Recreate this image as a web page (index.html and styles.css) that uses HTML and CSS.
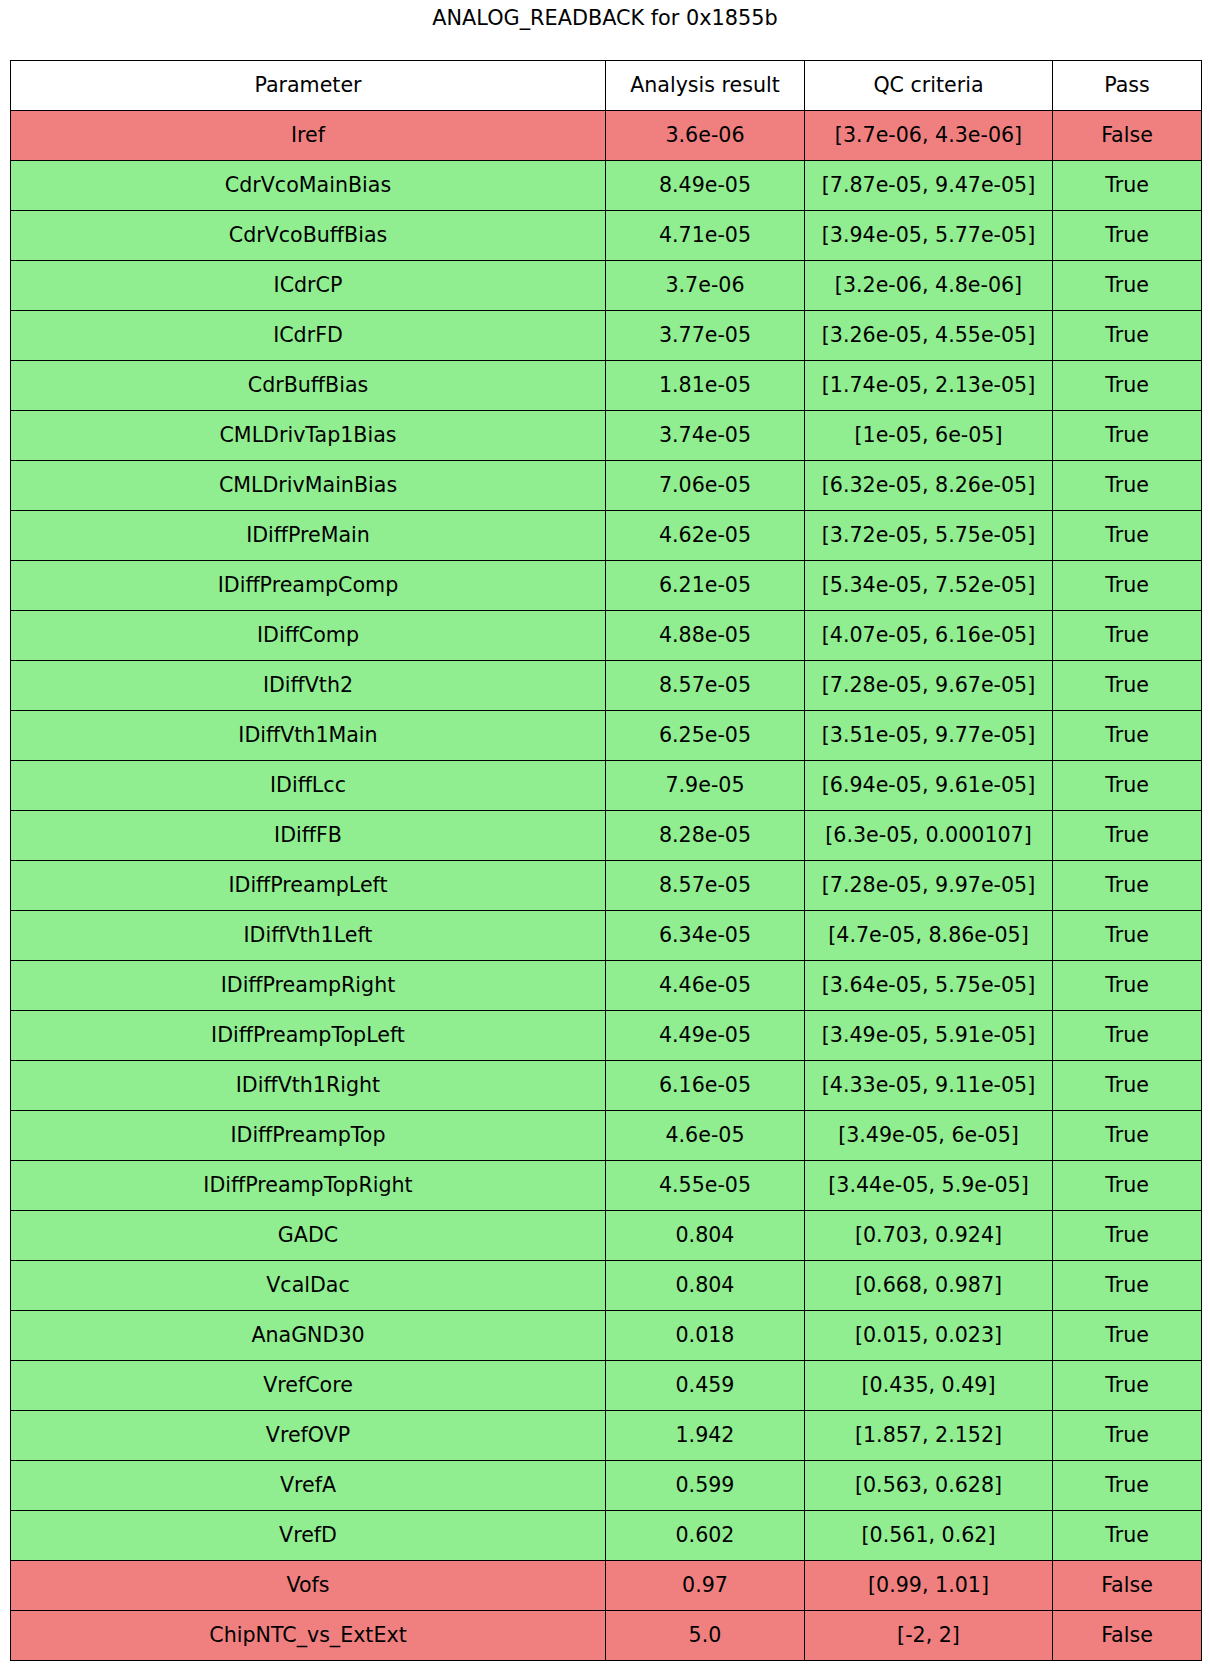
FILE: index.html
```html
<!DOCTYPE html>
<html>
<head>
<meta charset="utf-8">
<link rel="stylesheet" href="styles.css">
</head>
<body>
<div class="title">ANALOG_READBACK for 0x1855b</div>
<div class="table">
  <div class="cell head">Parameter</div><div class="cell head">Analysis result</div><div class="cell head">QC criteria</div><div class="cell head">Pass</div>
  <div class="cell bad">Iref</div><div class="cell bad">3.6e-06</div><div class="cell bad">[3.7e-06, 4.3e-06]</div><div class="cell bad">False</div>
  <div class="cell ok">CdrVcoMainBias</div><div class="cell ok">8.49e-05</div><div class="cell ok">[7.87e-05, 9.47e-05]</div><div class="cell ok">True</div>
  <div class="cell ok">CdrVcoBuffBias</div><div class="cell ok">4.71e-05</div><div class="cell ok">[3.94e-05, 5.77e-05]</div><div class="cell ok">True</div>
  <div class="cell ok">ICdrCP</div><div class="cell ok">3.7e-06</div><div class="cell ok">[3.2e-06, 4.8e-06]</div><div class="cell ok">True</div>
  <div class="cell ok">ICdrFD</div><div class="cell ok">3.77e-05</div><div class="cell ok">[3.26e-05, 4.55e-05]</div><div class="cell ok">True</div>
  <div class="cell ok">CdrBuffBias</div><div class="cell ok">1.81e-05</div><div class="cell ok">[1.74e-05, 2.13e-05]</div><div class="cell ok">True</div>
  <div class="cell ok">CMLDrivTap1Bias</div><div class="cell ok">3.74e-05</div><div class="cell ok">[1e-05, 6e-05]</div><div class="cell ok">True</div>
  <div class="cell ok">CMLDrivMainBias</div><div class="cell ok">7.06e-05</div><div class="cell ok">[6.32e-05, 8.26e-05]</div><div class="cell ok">True</div>
  <div class="cell ok">IDiffPreMain</div><div class="cell ok">4.62e-05</div><div class="cell ok">[3.72e-05, 5.75e-05]</div><div class="cell ok">True</div>
  <div class="cell ok">IDiffPreampComp</div><div class="cell ok">6.21e-05</div><div class="cell ok">[5.34e-05, 7.52e-05]</div><div class="cell ok">True</div>
  <div class="cell ok">IDiffComp</div><div class="cell ok">4.88e-05</div><div class="cell ok">[4.07e-05, 6.16e-05]</div><div class="cell ok">True</div>
  <div class="cell ok">IDiffVth2</div><div class="cell ok">8.57e-05</div><div class="cell ok">[7.28e-05, 9.67e-05]</div><div class="cell ok">True</div>
  <div class="cell ok">IDiffVth1Main</div><div class="cell ok">6.25e-05</div><div class="cell ok">[3.51e-05, 9.77e-05]</div><div class="cell ok">True</div>
  <div class="cell ok">IDiffLcc</div><div class="cell ok">7.9e-05</div><div class="cell ok">[6.94e-05, 9.61e-05]</div><div class="cell ok">True</div>
  <div class="cell ok">IDiffFB</div><div class="cell ok">8.28e-05</div><div class="cell ok">[6.3e-05, 0.000107]</div><div class="cell ok">True</div>
  <div class="cell ok">IDiffPreampLeft</div><div class="cell ok">8.57e-05</div><div class="cell ok">[7.28e-05, 9.97e-05]</div><div class="cell ok">True</div>
  <div class="cell ok">IDiffVth1Left</div><div class="cell ok">6.34e-05</div><div class="cell ok">[4.7e-05, 8.86e-05]</div><div class="cell ok">True</div>
  <div class="cell ok">IDiffPreampRight</div><div class="cell ok">4.46e-05</div><div class="cell ok">[3.64e-05, 5.75e-05]</div><div class="cell ok">True</div>
  <div class="cell ok">IDiffPreampTopLeft</div><div class="cell ok">4.49e-05</div><div class="cell ok">[3.49e-05, 5.91e-05]</div><div class="cell ok">True</div>
  <div class="cell ok">IDiffVth1Right</div><div class="cell ok">6.16e-05</div><div class="cell ok">[4.33e-05, 9.11e-05]</div><div class="cell ok">True</div>
  <div class="cell ok">IDiffPreampTop</div><div class="cell ok">4.6e-05</div><div class="cell ok">[3.49e-05, 6e-05]</div><div class="cell ok">True</div>
  <div class="cell ok">IDiffPreampTopRight</div><div class="cell ok">4.55e-05</div><div class="cell ok">[3.44e-05, 5.9e-05]</div><div class="cell ok">True</div>
  <div class="cell ok">GADC</div><div class="cell ok">0.804</div><div class="cell ok">[0.703, 0.924]</div><div class="cell ok">True</div>
  <div class="cell ok">VcalDac</div><div class="cell ok">0.804</div><div class="cell ok">[0.668, 0.987]</div><div class="cell ok">True</div>
  <div class="cell ok">AnaGND30</div><div class="cell ok">0.018</div><div class="cell ok">[0.015, 0.023]</div><div class="cell ok">True</div>
  <div class="cell ok">VrefCore</div><div class="cell ok">0.459</div><div class="cell ok">[0.435, 0.49]</div><div class="cell ok">True</div>
  <div class="cell ok">VrefOVP</div><div class="cell ok">1.942</div><div class="cell ok">[1.857, 2.152]</div><div class="cell ok">True</div>
  <div class="cell ok">VrefA</div><div class="cell ok">0.599</div><div class="cell ok">[0.563, 0.628]</div><div class="cell ok">True</div>
  <div class="cell ok">VrefD</div><div class="cell ok">0.602</div><div class="cell ok">[0.561, 0.62]</div><div class="cell ok">True</div>
  <div class="cell bad">Vofs</div><div class="cell bad">0.97</div><div class="cell bad">[0.99, 1.01]</div><div class="cell bad">False</div>
  <div class="cell bad">ChipNTC_vs_ExtExt</div><div class="cell bad">5.0</div><div class="cell bad">[-2, 2]</div><div class="cell bad">False</div>
</div>
</body>
</html>
```
FILE: styles.css
```css
html, body {
  margin: 0;
  padding: 0;
  background: #ffffff;
}
body {
  font-family: "DejaVu Sans", sans-serif;
  color: #000000;
  width: 1210px;
}
.title {
  height: 60px;
  box-sizing: border-box;
  padding-top: 4px;
  width: 1210px;
  text-align: center;
  font-size: 20.8px;
  line-height: 28px;
}
.table {
  margin-left: 10px;
  width: 1192px;
  box-sizing: border-box;
  display: grid;
  grid-template-columns: 595px 199px 248px 149px;
  grid-auto-rows: 50px;
  border-top: 1px solid #000;
  border-left: 1px solid #000;
}
.cell {
  border-right: 1px solid #000;
  border-bottom: 1px solid #000;
  display: flex;
  align-items: center;
  justify-content: center;
  font-size: 20.6px;
  white-space: nowrap;
  padding-bottom: 2px;
  box-sizing: border-box;
}
.head { background: #ffffff; }
.ok { background: #90ee90; }
.bad { background: #f08080; }
```
